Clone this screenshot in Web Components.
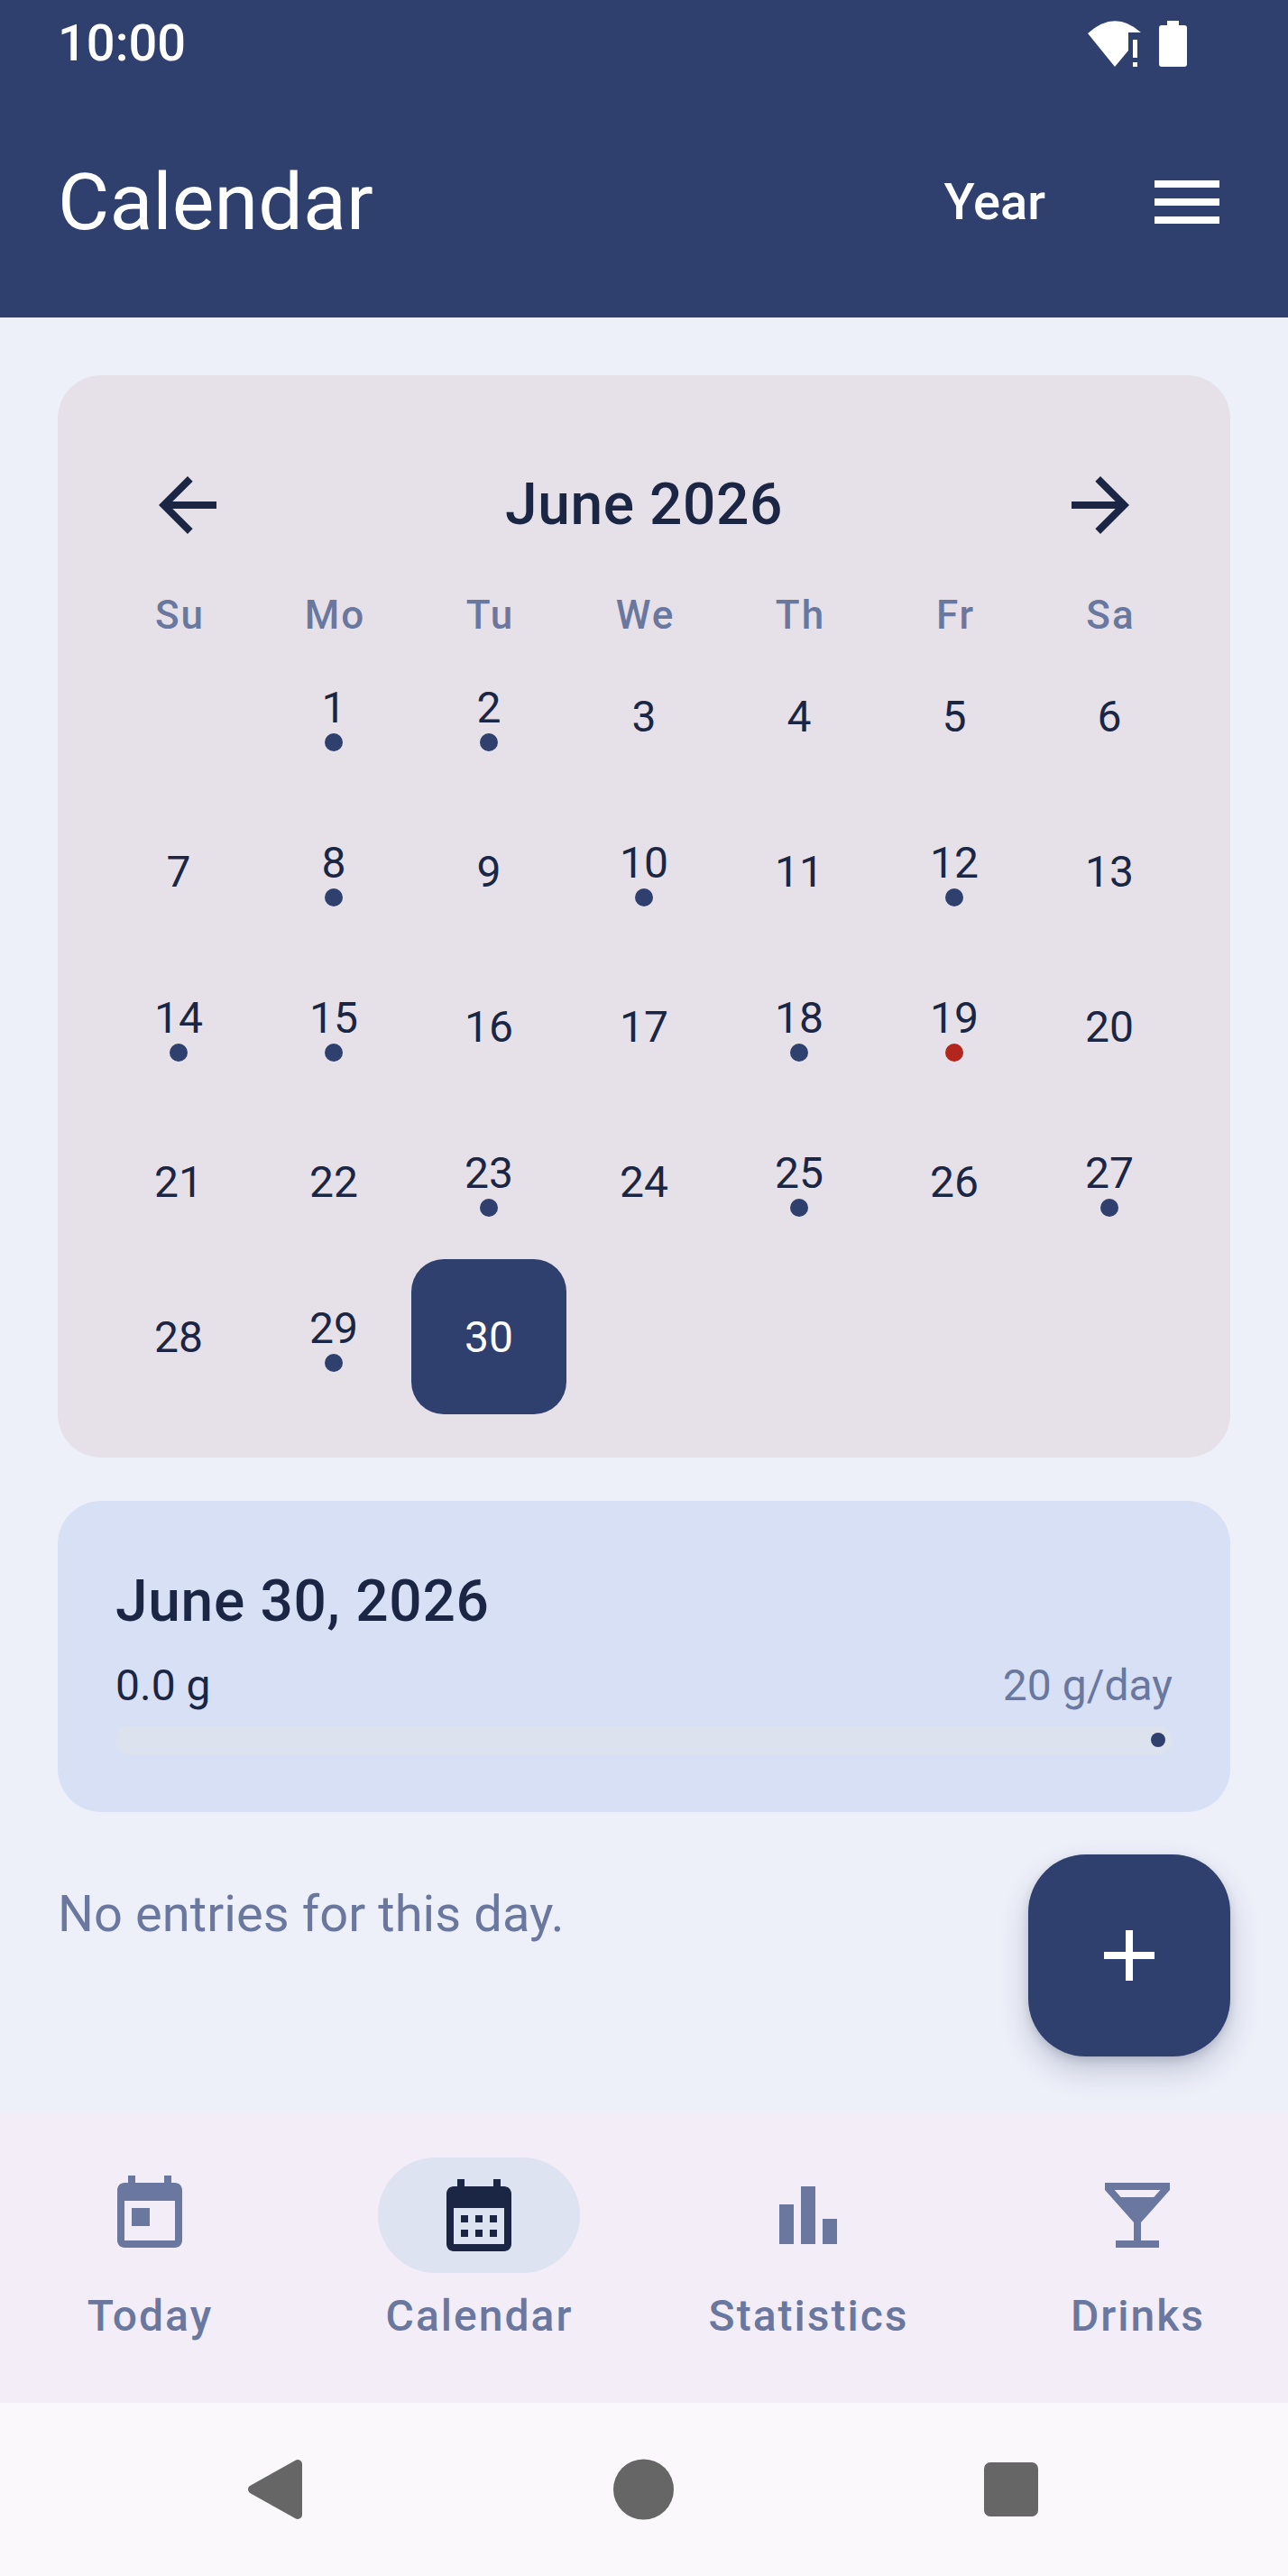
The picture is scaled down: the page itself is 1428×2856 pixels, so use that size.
<!DOCTYPE html>
<html lang="en">
<head>
<meta charset="utf-8">
<title>Calendar</title>
<style>
    html, body { margin: 0; padding: 0; }
    body { background: #edf0f9; font-family: Roboto, "Liberation Sans", sans-serif; }
    svg { display: block; }
</style>
</head>
<body>
<app-shell>
    <status-bar time="10:00"></status-bar>
    <app-bar heading="Calendar" action="Year"></app-bar>
    <main-area>
        <month-calendar title="June 2026"></month-calendar>
        <day-summary date="June 30, 2026" amount="0.0 g" limit="20 g/day"></day-summary>
        <empty-note>No entries for this day.</empty-note>
        <fab-button></fab-button>
    </main-area>
    <bottom-nav>
        <nav-item label="Today">
            <svg width="96" height="96" viewBox="0 1 24 24" fill="#6a789f"><path d="M19 4h-1V2h-2v2H8V2H6v2H5c-1.11 0-1.99.9-1.99 2L3 20c0 1.1.89 2 2 2h14c1.1 0 2-.9 2-2V6c0-1.1-.9-2-2-2zm0 16H5V9h14v11zM7 11h5v5H7z"/></svg>
        </nav-item>
        <nav-item label="Calendar" active>
            <svg width="96" height="96" viewBox="0 0 24 24" fill="#1b2645"><path d="M19 4h-1V2h-2v2H8V2H6v2H5c-1.11 0-2 .9-2 2v14c0 1.1.89 2 2 2h14c1.1 0 2-.9 2-2V6c0-1.1-.9-2-2-2zm0 16H5V10h14v10zM9 14H7v-2h2v2zm4 0h-2v-2h2v2zm4 0h-2v-2h2v2zM9 18H7v-2h2v2zm4 0h-2v-2h2v2zm4 0h-2v-2h2v2z"/></svg>
        </nav-item>
        <nav-item label="Statistics">
            <svg width="96" height="96" viewBox="0 0 24 24" fill="#6a789f"><path d="M4 9h4v11H4zm12 4h4v7h-4zm-6-9h4v16h-4z"/></svg>
        </nav-item>
        <nav-item label="Drinks">
            <svg width="96" height="96" viewBox="0 0 24 24" fill="#6a789f"><path d="M21 5V3H3v2l8 9v5H6v2h12v-2h-5v-5l8-9zM7.43 7L5.66 5h12.69l-1.78 2H7.43z"/></svg>
        </nav-item>
    </bottom-nav>
    <system-nav></system-nav>
</app-shell>

<script>
class AppShell extends HTMLElement {
    constructor() {
        super();
        this.attachShadow({ mode: 'open' });
        this.shadowRoot.innerHTML = `
            <style>
                :host { display: flex; flex-direction: column; height: 2856px; background: #edf0f9; }
            </style>
            <slot></slot>
        `;
    }
}
customElements.define('app-shell', AppShell);

class StatusBar extends HTMLElement {
    constructor() {
        super();
        this.attachShadow({ mode: 'open' });
        this.shadowRoot.innerHTML = `
            <style>
                :host {
                    display: flex; align-items: center; justify-content: space-between;
                    height: 96px; padding: 0 112px 0 64px; box-sizing: border-box;
                    background: #2f3f6e; color: #fff;
                    font: 500 56px/64px Roboto, sans-serif;
                }
                .icons { display: flex; align-items: center; gap: 19px; }
                svg { display: block; }
            </style>
            <span>${this.getAttribute('time')}</span>
            <div class="icons">
                <svg width="60" height="51" viewBox="0 0 60 51" fill="#fff">
                    <path d="M0 14 Q30 -13 59 13 L45 13 L45 33 L30 51 Z"/>
                    <path d="M50 21h5v20h-5zM50 46h5v5h-5z"/>
                </svg>
                <svg width="31" height="51" viewBox="0 0 31 51" fill="#fff">
                    <path d="M9 0h13v5h6a3 3 0 0 1 3 3v40a3 3 0 0 1-3 3H3a3 3 0 0 1-3-3V8a3 3 0 0 1 3-3h6z"/>
                </svg>
            </div>
        `;
    }
}
customElements.define('status-bar', StatusBar);

class AppBar extends HTMLElement {
    constructor() {
        super();
        this.attachShadow({ mode: 'open' });
        this.shadowRoot.innerHTML = `
            <style>
                :host {
                    display: flex; align-items: center;
                    height: 256px; padding: 0 64px; box-sizing: border-box;
                    background: #2f3f6e; color: #fff;
                }
                h1 { flex: 1; margin: 0; font: 400 88px/112px Roboto, sans-serif; letter-spacing: .1px; }
                .action { margin-right: 109px; font: 500 56px/80px Roboto, sans-serif; }
                svg { display: block; }
            </style>
            <h1>${this.getAttribute('heading')}</h1>
            <span class="action">${this.getAttribute('action')}</span>
            <svg width="96" height="96" viewBox="0 0 24 24" fill="#fff"><path d="M3 18h18v-2H3v2zm0-5h18v-2H3v2zm0-7v2h18V6H3z"/></svg>
        `;
    }
}
customElements.define('app-bar', AppBar);

class MainArea extends HTMLElement {
    constructor() {
        super();
        this.attachShadow({ mode: 'open' });
        this.shadowRoot.innerHTML = `
            <style>
                :host {
                    display: flex; flex-direction: column; gap: 48px;
                    flex: 1; position: relative;
                    padding: 64px 64px 0; box-sizing: border-box;
                }
            </style>
            <slot></slot>
        `;
    }
}
customElements.define('main-area', MainArea);

class DayCell extends HTMLElement {
    constructor() {
        super();
        this.attachShadow({ mode: 'open' });
        this.shadowRoot.innerHTML = `
            <style>
                :host {
                    display: flex; flex-direction: column; align-items: center; justify-content: center;
                    height: 172px; border-radius: 36px;
                    color: #1b2645; font: 400 48px/60px Roboto, sans-serif;
                }
                :host([selected]) { background: #2f3f6e; color: #fff; }
                .num { height: 58px; }
                .dot { width: 20px; height: 20px; border-radius: 50%; background: #2f3f6e; }
                :host([dot="red"]) .dot { background: #b3261e; }
                :host(:not([dot])) .dot { display: none; }
            </style>
            <div class="num"><slot></slot></div>
            <div class="dot"></div>
        `;
    }
}
customElements.define('day-cell', DayCell);

class MonthCalendar extends HTMLElement {
    constructor() {
        super();
        this.attachShadow({ mode: 'open' });
        const weekdays = ['Su', 'Mo', 'Tu', 'We', 'Th', 'Fr', 'Sa'];
        const marked = [1, 2, 8, 10, 12, 14, 15, 18, 23, 25, 27, 29];
        let cells = '<day-cell></day-cell>';
        for (let d = 1; d <= 30; d++) {
            let attrs = '';
            if (marked.includes(d)) attrs = ' dot';
            if (d === 19) attrs = ' dot="red"';
            if (d === 30) attrs = ' selected';
            cells += `<day-cell${attrs}>${d}</day-cell>`;
        }
        this.shadowRoot.innerHTML = `
            <style>
                :host {
                    display: block; padding: 48px; border-radius: 48px;
                    background: #e6e1e8;
                }
                .top {
                    display: flex; align-items: center; justify-content: space-between;
                    padding: 48px 48px 48px;
                }
                .top span { color: #1b2645; font: 500 64px/96px Roboto, sans-serif; letter-spacing: .6px; }
                svg { display: block; }
                .grid { display: grid; grid-template-columns: repeat(7, 172px); }
                .wd {
                    text-align: center; height: 52px; padding-left: 3px;
                    color: #6a789f; font: 500 44px/52px Roboto, sans-serif; letter-spacing: 2px;
                }
            </style>
            <div class="top">
                <svg width="96" height="96" viewBox="0 0 24 24" fill="#1b2645"><path d="M20 11H7.83l5.59-5.59L12 4l-8 8 8 8 1.41-1.41L7.83 13H20v-2z"/></svg>
                <span>${this.getAttribute('title')}</span>
                <svg width="96" height="96" viewBox="0 0 24 24" fill="#1b2645"><path d="M4 11h12.17l-5.59-5.59L12 4l8 8-8 8-1.41-1.41L16.17 13H4v-2z"/></svg>
            </div>
            <div class="grid">
                ${weekdays.map(w => `<div class="wd">${w}</div>`).join('')}
                ${cells}
            </div>
        `;
    }
}
customElements.define('month-calendar', MonthCalendar);

class DaySummary extends HTMLElement {
    constructor() {
        super();
        this.attachShadow({ mode: 'open' });
        this.shadowRoot.innerHTML = `
            <style>
                :host {
                    display: block; padding: 64px; border-radius: 48px;
                    background: #d7e0f5; color: #1b2645;
                }
                h2 { margin: 0 0 16px; font: 500 64px/96px Roboto, sans-serif; letter-spacing: .7px; }
                .row {
                    display: flex; justify-content: space-between;
                    margin-bottom: 16px; font: 400 48px/57px Roboto, sans-serif;
                }
                .limit { color: #6a789f; }
                .track {
                    display: flex; align-items: center; justify-content: flex-end;
                    height: 32px; padding-right: 8px; box-sizing: border-box;
                    border-radius: 16px; background: #dde3ee;
                }
                .stop { width: 16px; height: 16px; border-radius: 50%; background: #2f3f6e; }
            </style>
            <h2>${this.getAttribute('date')}</h2>
            <div class="row">
                <span>${this.getAttribute('amount')}</span>
                <span class="limit">${this.getAttribute('limit')}</span>
            </div>
            <div class="track"><div class="stop"></div></div>
        `;
    }
}
customElements.define('day-summary', DaySummary);

class EmptyNote extends HTMLElement {
    constructor() {
        super();
        this.attachShadow({ mode: 'open' });
        this.shadowRoot.innerHTML = `
            <style>
                :host {
                    display: block; margin-top: 25px;
                    color: #6a789f; font: 400 56px/80px Roboto, sans-serif; letter-spacing: .08px;
                }
            </style>
            <slot></slot>
        `;
    }
}
customElements.define('empty-note', EmptyNote);

class FabButton extends HTMLElement {
    constructor() {
        super();
        this.attachShadow({ mode: 'open' });
        this.shadowRoot.innerHTML = `
            <style>
                :host {
                    position: absolute; right: 64px; bottom: 64px;
                    display: flex; align-items: center; justify-content: center;
                    width: 224px; height: 224px; border-radius: 64px;
                    background: #2f3f6e;
                    box-shadow: 0 16px 32px rgba(40, 50, 90, .22), 0 4px 10px rgba(40, 50, 90, .16);
                }
                svg { display: block; }
            </style>
            <svg width="96" height="96" viewBox="0 0 24 24" fill="#fff"><path d="M19 13h-6v6h-2v-6H5v-2h6V5h2v6h6v2z"/></svg>
        `;
    }
}
customElements.define('fab-button', FabButton);

class BottomNav extends HTMLElement {
    constructor() {
        super();
        this.attachShadow({ mode: 'open' });
        this.shadowRoot.innerHTML = `
            <style>
                :host {
                    display: grid; grid-template-columns: repeat(4, 320px); column-gap: 45px;
                    height: 320px; padding: 48px 6px 0; box-sizing: border-box;
                    background: #f3edf8;
                }
            </style>
            <slot></slot>
        `;
    }
}
customElements.define('bottom-nav', BottomNav);

class NavItem extends HTMLElement {
    constructor() {
        super();
        this.attachShadow({ mode: 'open' });
        this.shadowRoot.innerHTML = `
            <style>
                :host { display: flex; flex-direction: column; align-items: center; }
                .pill {
                    display: flex; align-items: center; justify-content: center;
                    width: 224px; height: 128px; border-radius: 64px;
                }
                :host([active]) .pill { background: #dde3f0; }
                .label {
                    margin-top: 16px; padding-left: 1px;
                    color: #6a789f; font: 500 48px/64px Roboto, sans-serif; letter-spacing: 2px;
                }
            </style>
            <div class="pill"><slot></slot></div>
            <div class="label">${this.getAttribute('label')}</div>
        `;
    }
}
customElements.define('nav-item', NavItem);

class SystemNav extends HTMLElement {
    constructor() {
        super();
        this.attachShadow({ mode: 'open' });
        this.shadowRoot.innerHTML = `
            <style>
                :host {
                    display: flex; align-items: center; justify-content: center; gap: 342px;
                    height: 192px; background: #faf8fb;
                }
                svg { display: block; overflow: visible; }
            </style>
            <svg width="66" height="66" viewBox="0 0 66 66"><path d="M7 33L57 5V61Z" fill="#666" stroke="#666" stroke-width="10" stroke-linejoin="round"/></svg>
            <svg width="66" height="66" viewBox="0 0 66 66"><circle cx="32.5" cy="33" r="33.5" fill="#666"/></svg>
            <svg width="66" height="66" viewBox="0 0 66 66"><rect x="2" y="3" width="60" height="60" rx="7" fill="#666"/></svg>
        `;
    }
}
customElements.define('system-nav', SystemNav);
</script>
</body>
</html>
